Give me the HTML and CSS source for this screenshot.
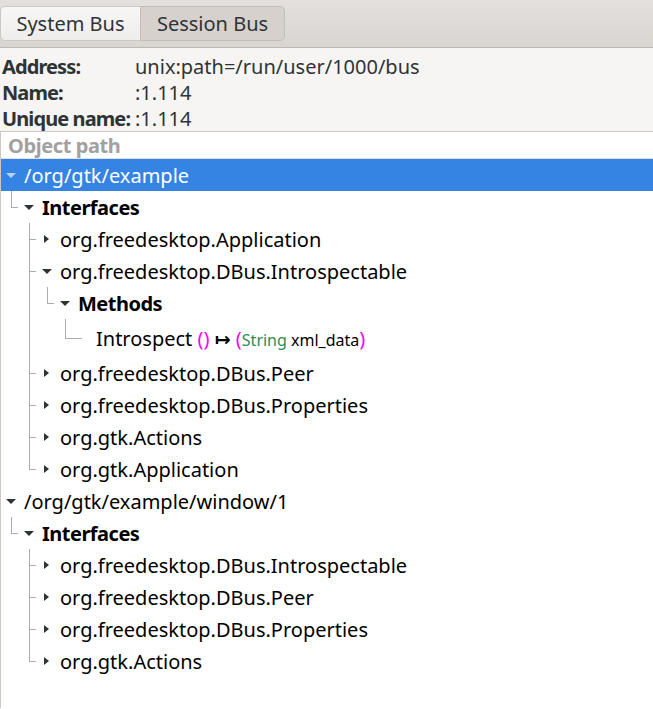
FILE: index.html
```html
<!DOCTYPE html>
<html>
<head>
<meta charset="utf-8">
<link rel="stylesheet" href="styles.css">
</head>
<body>
<div class="header">
  <div class="tabs">
    <div class="tab tab-first">System Bus</div>
    <div class="tab tab-last active">Session Bus</div>
  </div>
</div>
<div class="info">
  <div class="label">Address:</div><div class="value">unix:path=/run/user/1000/bus</div>
  <div class="label">Name:</div><div class="value">:1.114</div>
  <div class="label">Unique name:</div><div class="value">:1.114</div>
</div>
<div class="tree">
  <div class="tree-head">Object path</div>
  <div class="row selected"><span class="cell exp open"></span><span class="text">/org/gtk/example</span></div>
  <div class="row"><span class="cell g-end"></span><span class="cell exp open"></span><span class="text bold">Interfaces</span></div>
  <div class="row"><span class="cell"></span><span class="cell g-tee"></span><span class="cell exp closed"></span><span class="text">org.freedesktop.Application</span></div>
  <div class="row"><span class="cell"></span><span class="cell g-tee"></span><span class="cell exp open"></span><span class="text">org.freedesktop.DBus.Introspectable</span></div>
  <div class="row"><span class="cell"></span><span class="cell g-pipe"></span><span class="cell g-end"></span><span class="cell exp open"></span><span class="text bold">Methods</span></div>
  <div class="row tall"><span class="cell"></span><span class="cell g-pipe"></span><span class="cell"></span><span class="cell g-end leaf"></span><span class="cell"></span><span class="text">Introspect <span class="paren">()</span> <span class="arrow">↦</span> <span class="paren">(</span><span class="small type">String</span><span class="small"> xml_data</span><span class="paren">)</span></span></div>
  <div class="row"><span class="cell"></span><span class="cell g-tee"></span><span class="cell exp closed"></span><span class="text">org.freedesktop.DBus.Peer</span></div>
  <div class="row"><span class="cell"></span><span class="cell g-tee"></span><span class="cell exp closed"></span><span class="text">org.freedesktop.DBus.Properties</span></div>
  <div class="row"><span class="cell"></span><span class="cell g-tee"></span><span class="cell exp closed"></span><span class="text">org.gtk.Actions</span></div>
  <div class="row"><span class="cell"></span><span class="cell g-end"></span><span class="cell exp closed"></span><span class="text">org.gtk.Application</span></div>
  <div class="row"><span class="cell exp open"></span><span class="text">/org/gtk/example/window/1</span></div>
  <div class="row"><span class="cell g-end"></span><span class="cell exp open"></span><span class="text bold">Interfaces</span></div>
  <div class="row"><span class="cell"></span><span class="cell g-tee"></span><span class="cell exp closed"></span><span class="text">org.freedesktop.DBus.Introspectable</span></div>
  <div class="row"><span class="cell"></span><span class="cell g-tee"></span><span class="cell exp closed"></span><span class="text">org.freedesktop.DBus.Peer</span></div>
  <div class="row"><span class="cell"></span><span class="cell g-tee"></span><span class="cell exp closed"></span><span class="text">org.freedesktop.DBus.Properties</span></div>
  <div class="row"><span class="cell"></span><span class="cell g-end"></span><span class="cell exp closed"></span><span class="text">org.gtk.Actions</span></div>
</div>
</body>
</html>
```
FILE: styles.css
```css
html, body {
  margin: 0;
  padding: 0;
}
body {
  font-family: "Noto Sans", "DejaVu Sans", sans-serif;
  font-size: 20px;
  color: #2e3436;
  background: #ffffff;
  width: 653px;
  height: 709px;
  overflow: hidden;
}
.header {
  background: linear-gradient(#e3e0dd, #d9d5d1);
  border-bottom: 1px solid #bfb8b1;
  padding: 6px 0 6px 0;
  height: 35px;
}
.tabs {
  display: flex;
  height: 35px;
}
.tab {
  display: flex;
  align-items: center;
  justify-content: center;
  box-sizing: border-box;
  height: 35px;
  border: 1px solid #cdc7c2;
  line-height: 1;
}
.tab-first {
  width: 140px;
  border-radius: 5px 0 0 5px;
  background: linear-gradient(#f8f7f6, #efedeb);
  border-right: none;
}
.tab-last {
  width: 145px;
  border-radius: 0 5px 5px 0;
  background: #d6d1cd;
  border-color: #c4bdb7;
}
.info {
  background: #f6f5f4;
  display: grid;
  grid-template-columns: 133px auto;
  grid-auto-rows: 26px;
  align-items: center;
  padding: 5px 0 0 2px;
  height: 78px;
}
.label {
  font-weight: bold;
  white-space: nowrap;
  letter-spacing: -0.9px;
}
.tree {
  border-top: 1px solid #cdc7c2;
  border-left: 1px solid #cdc7c2;
  height: 576px;
  background: #ffffff;
  color: #000000;
}
.tree-head {
  height: 26px;
  border-bottom: 1px solid #e2e0de;
  color: #a1a1a1;
  font-weight: bold;
  letter-spacing: -0.4px;
  padding-left: 7px;
  line-height: 28px;
}
.row {
  display: flex;
  align-items: stretch;
  height: 32px;
  padding-left: 1px;
}
.row.tall {
  height: 38px;
}
.row.selected {
  background: #3584e4;
  color: #ffffff;
}
.cell {
  width: 18px;
  flex: none;
  position: relative;
}
.text {
  padding-left: 4px;
  padding-top: 2px;
  align-self: center;
  white-space: pre;
  line-height: 24px;
}
.bold {
  font-weight: bold;
  letter-spacing: -0.5px;
}
.exp::before {
  content: "";
  position: absolute;
  left: 50%;
  top: 50%;
  width: 0;
  height: 0;
}
.exp.open::before {
  margin-left: -5px;
  margin-top: -2px;
  border-left: 5px solid transparent;
  border-right: 5px solid transparent;
  border-top: 5px solid #2e3436;
}
.exp.closed::before {
  margin-left: -3px;
  margin-top: -4px;
  border-top: 4px solid transparent;
  border-bottom: 4px solid transparent;
  border-left: 5px solid #2e3436;
}
.selected .exp.open::before {
  border-top-color: #b6d1f4;
}
.g-pipe::before,
.g-tee::before,
.g-end::before {
  content: "";
  position: absolute;
  left: 9px;
  top: 0;
  width: 1px;
  background: #ababab;
}
.g-pipe::before,
.g-tee::before {
  bottom: 0;
}
.g-end::before {
  height: 50%;
}
.g-tee::after,
.g-end::after {
  content: "";
  position: absolute;
  left: 9px;
  top: 50%;
  width: 7px;
  height: 1px;
  background: #ababab;
}
.g-end.leaf::after {
  width: 17px;
}
.paren {
  color: #ff00ff;
}
.arrow {
  font-family: "DejaVu Sans", sans-serif;
  font-weight: bold;
  font-size: 19px;
}
.small {
  font-size: 16px;
}
.type {
  color: #2e8b57;
}
```
